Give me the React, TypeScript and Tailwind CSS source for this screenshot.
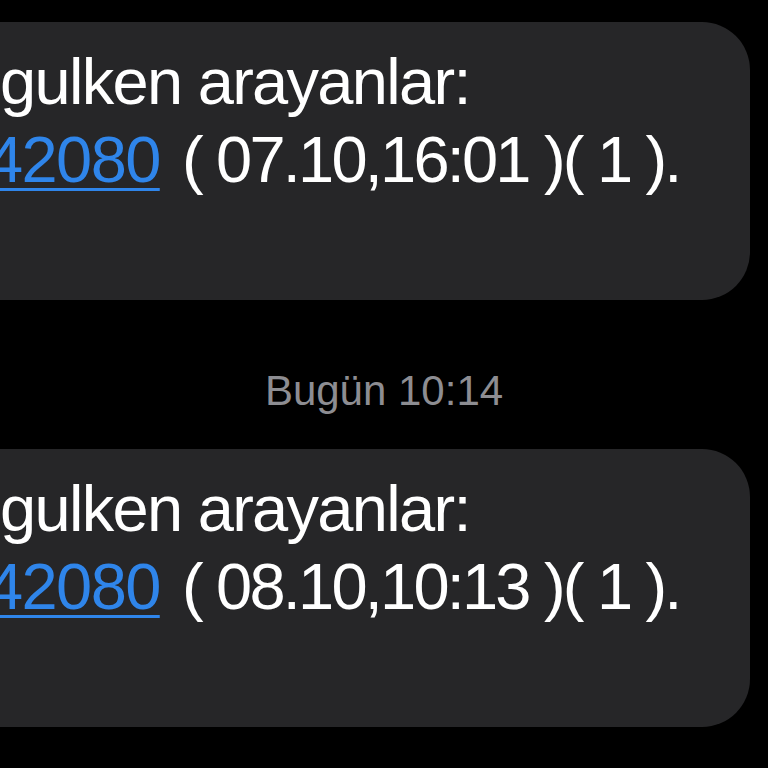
import React from 'react';

interface Message {
  time?: string;
  stamp: string;
}

const messages: Message[] = [
  { stamp: '( 07.10,16:01 )( 1 ).' },
  { time: '10:14', stamp: '( 08.10,10:13 )( 1 ).' },
];

function Bubble({ stamp }: { stamp: string }) {
  return (
    <div className="-ml-[60px] mr-[18px] rounded-[48px] bg-[#262628] pl-[60px] pt-[21px] pb-[101px] text-[65px] leading-[78px] text-white">
      <p className="tracking-[-1.7px] whitespace-nowrap">gulken arayanlar:</p>
      <p className="-ml-[13px] whitespace-nowrap">
        <a className="tracking-[-1.6px] text-[#2f85ea] underline decoration-[3px] underline-offset-[6px]">42080</a>
        <span className="ml-[7px] tracking-[-2.8px]">{' '}{stamp}</span>
      </p>
    </div>
  );
}

export default function App() {
  return (
    <div
      className="min-h-[768px] w-[768px] overflow-hidden bg-black pt-[22px]"
      style={{ fontFamily: '"Liberation Sans", Arial, sans-serif' }}
    >
      {messages.map((m, i) => (
        <div key={i}>
          {m.time && (
            <div className="mt-[67px] mb-[34px] text-center text-[42px] leading-[48px] text-[#8d8d92]">
              Bugün {m.time}
            </div>
          )}
          <Bubble stamp={m.stamp} />
        </div>
      ))}
    </div>
  );
}
